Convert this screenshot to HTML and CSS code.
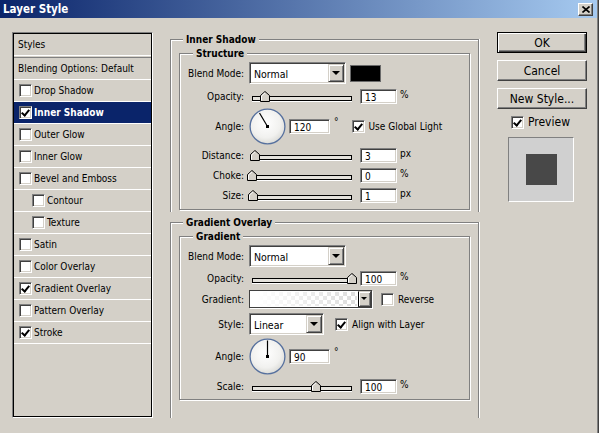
FILE: index.html
```html
<!DOCTYPE html>
<html lang="en">
<head>
    <meta charset="UTF-8">
    <title>Layer Style</title>
    <link rel="stylesheet" href="styles.css">
</head>
<body>
    <div class="window">
        <div class="titlebar">
            <span class="caption">Layer Style</span>
            <span class="close-btn">
                <svg width="8" height="7" viewBox="0 0 8 7"><path d="M0.5 0.5 L7.5 6.5 M7.5 0.5 L0.5 6.5" stroke="#000" stroke-width="1.6" fill="none"/></svg>
            </span>
        </div>

        <div class="dialog">
            <!-- Styles list -->
            <div class="styles-list">
                <div class="styles-inner">
                    <div class="list-row list-head">Styles</div>
                    <div class="list-row blending">Blending Options: Default</div>
                    <div class="list-row"><span class="chk"></span>Drop Shadow</div>
                    <div class="list-row selected"><span class="chk on"></span>Inner Shadow</div>
                    <div class="list-row"><span class="chk"></span>Outer Glow</div>
                    <div class="list-row"><span class="chk"></span>Inner Glow</div>
                    <div class="list-row"><span class="chk"></span>Bevel and Emboss</div>
                    <div class="list-row sub"><span class="chk"></span>Contour</div>
                    <div class="list-row sub"><span class="chk"></span>Texture</div>
                    <div class="list-row"><span class="chk"></span>Satin</div>
                    <div class="list-row"><span class="chk"></span>Color Overlay</div>
                    <div class="list-row"><span class="chk on"></span>Gradient Overlay</div>
                    <div class="list-row"><span class="chk"></span>Pattern Overlay</div>
                    <div class="list-row"><span class="chk on"></span>Stroke</div>
                </div>
            </div>

            <!-- Settings -->
            <div class="settings">
                <div class="section">
                    <div class="section-title">Inner Shadow</div>
                    <div class="group">
                        <div class="group-title">Structure</div>
                        <div class="field field-select">
                            <label>Blend Mode:</label>
                            <div class="select blend"><span class="select-text">Normal</span><span class="drop"></span></div>
                            <span class="swatch"></span>
                        </div>
                        <div class="field">
                            <label>Opacity:</label>
                            <div class="slider"><div class="track"></div><span class="thumb" style="left: 13%"><svg width="10" height="11" viewBox="0 0 10 11"><polygon points="0.5,10.5 0.5,4.5 5,0.5 9.5,4.5 9.5,10.5" fill="#d4d0c8" stroke="#000"/><path d="M1.5 9.5 V5 L5 1.8" stroke="#fff" fill="none"/></svg></span></div>
                            <span class="num">13</span><span class="unit">%</span>
                        </div>
                        <div class="field field-angle">
                            <label>Angle:</label>
                            <svg class="dial" width="37" height="37" viewBox="0 0 37 37">
                                <defs>
                                    <radialGradient id="dialFill1" cx="0.45" cy="0.4" r="0.6">
                                        <stop offset="0" stop-color="#ffffff"/>
                                        <stop offset="0.7" stop-color="#f1f1ef"/>
                                        <stop offset="1" stop-color="#dcdcd8"/>
                                    </radialGradient>
                                </defs>
                                <circle cx="18.5" cy="18.5" r="17.4" fill="url(#dialFill1)" stroke="#56709e" stroke-width="1.3"/>
                                <line x1="18.5" y1="18.5" x2="10.5" y2="5" stroke="#000" stroke-width="1.2"/>
                                <rect x="17" y="17" width="3" height="3" fill="#000"/>
                            </svg>
                            <span class="num num-angle">120</span><span class="deg">°</span>
                            <span class="chk on check-gap"></span><span class="check-label">Use Global Light</span>
                        </div>
                        <div class="field">
                            <label>Distance:</label>
                            <div class="slider"><div class="track"></div><span class="thumb" style="left: 3%"><svg width="10" height="11" viewBox="0 0 10 11"><polygon points="0.5,10.5 0.5,4.5 5,0.5 9.5,4.5 9.5,10.5" fill="#d4d0c8" stroke="#000"/><path d="M1.5 9.5 V5 L5 1.8" stroke="#fff" fill="none"/></svg></span></div>
                            <span class="num">3</span><span class="unit">px</span>
                        </div>
                        <div class="field">
                            <label>Choke:</label>
                            <div class="slider"><div class="track"></div><span class="thumb" style="left: 0%"><svg width="10" height="11" viewBox="0 0 10 11"><polygon points="0.5,10.5 0.5,4.5 5,0.5 9.5,4.5 9.5,10.5" fill="#d4d0c8" stroke="#000"/><path d="M1.5 9.5 V5 L5 1.8" stroke="#fff" fill="none"/></svg></span></div>
                            <span class="num">0</span><span class="unit">%</span>
                        </div>
                        <div class="field">
                            <label>Size:</label>
                            <div class="slider"><div class="track"></div><span class="thumb" style="left: 1%"><svg width="10" height="11" viewBox="0 0 10 11"><polygon points="0.5,10.5 0.5,4.5 5,0.5 9.5,4.5 9.5,10.5" fill="#d4d0c8" stroke="#000"/><path d="M1.5 9.5 V5 L5 1.8" stroke="#fff" fill="none"/></svg></span></div>
                            <span class="num">1</span><span class="unit">px</span>
                        </div>
                    </div>
                </div>

                <div class="section section-gradient">
                    <div class="section-title">Gradient Overlay</div>
                    <div class="group group-gradient">
                        <div class="group-title">Gradient</div>
                        <div class="field field-select">
                            <label>Blend Mode:</label>
                            <div class="select blend"><span class="select-text">Normal</span><span class="drop"></span></div>
                        </div>
                        <div class="field">
                            <label>Opacity:</label>
                            <div class="slider"><div class="track"></div><span class="thumb" style="left: 100%"><svg width="10" height="11" viewBox="0 0 10 11"><polygon points="0.5,10.5 0.5,4.5 5,0.5 9.5,4.5 9.5,10.5" fill="#d4d0c8" stroke="#000"/><path d="M1.5 9.5 V5 L5 1.8" stroke="#fff" fill="none"/></svg></span></div>
                            <span class="num">100</span><span class="unit">%</span>
                        </div>
                        <div class="field field-gradient">
                            <label>Gradient:</label>
                            <div class="gradient-box"><span class="gradient-fill"></span><span class="drop small"></span></div>
                            <span class="chk reverse-gap"></span><span class="check-label">Reverse</span>
                        </div>
                        <div class="field field-select field-style">
                            <label>Style:</label>
                            <div class="select style-select"><span class="select-text">Linear</span><span class="drop"></span></div>
                            <span class="chk on align-gap"></span><span class="check-label">Align with Layer</span>
                        </div>
                        <div class="field field-angle field-angle2">
                            <label>Angle:</label>
                            <svg class="dial" width="37" height="37" viewBox="0 0 37 37">
                                <defs>
                                    <radialGradient id="dialFill2" cx="0.45" cy="0.4" r="0.6">
                                        <stop offset="0" stop-color="#ffffff"/>
                                        <stop offset="0.7" stop-color="#f1f1ef"/>
                                        <stop offset="1" stop-color="#dcdcd8"/>
                                    </radialGradient>
                                </defs>
                                <circle cx="18.5" cy="18.5" r="17.4" fill="url(#dialFill2)" stroke="#56709e" stroke-width="1.3"/>
                                <line x1="18.5" y1="18.5" x2="18.5" y2="2.5" stroke="#000" stroke-width="1.2"/>
                                <rect x="17" y="17" width="3" height="3" fill="#000"/>
                            </svg>
                            <span class="num num-angle">90</span><span class="deg">°</span>
                        </div>
                        <div class="field field-scale">
                            <label>Scale:</label>
                            <div class="slider"><div class="track"></div><span class="thumb" style="left: 64%"><svg width="10" height="11" viewBox="0 0 10 11"><polygon points="0.5,10.5 0.5,4.5 5,0.5 9.5,4.5 9.5,10.5" fill="#d4d0c8" stroke="#000"/><path d="M1.5 9.5 V5 L5 1.8" stroke="#fff" fill="none"/></svg></span></div>
                            <span class="num">100</span><span class="unit">%</span>
                        </div>
                    </div>
                </div>
            </div>

            <!-- Buttons and preview -->
            <div class="actions">
                <div class="btn btn-default">OK</div>
                <div class="btn">Cancel</div>
                <div class="btn">New Style...</div>
                <div class="preview-check"><span class="chk on"></span><span class="check-label">Preview</span></div>
                <div class="preview-box"><span class="preview-swatch"></span></div>
            </div>
        </div>
    </div>
</body>
</html>
```

FILE: styles.css
```css
:root {
    --face: #d4d0c8;
    --shadow: #808080;
    --dark: #404040;
    --hilite: #ffffff;
    --selected: #0a246a;
}

* {
    margin: 0;
    padding: 0;
    box-sizing: border-box;
}

body {
    background: var(--face);
    font-family: Tahoma, "DejaVu Sans Condensed", "Liberation Sans", sans-serif;
    font-size: 10px;
    color: #000;
}

.window {
    width: 599px;
    height: 433px;
    background: var(--face);
    border-right: 1px solid var(--dark);
    box-shadow: inset -1px 0 var(--shadow);
}

/* Title bar */
.titlebar {
    height: 18px;
    margin-right: 1px;
    padding: 0 4px 0 3px;
    display: flex;
    align-items: center;
    justify-content: space-between;
    background: linear-gradient(to right, #0a246a, #a6caf0);
    color: #fff;
}

.caption {
    font-size: 11.5px;
    font-weight: bold;
    line-height: 18px;
}

.close-btn {
    width: 15px;
    height: 13px;
    display: flex;
    align-items: center;
    justify-content: center;
    background: var(--face);
    border: 1px solid;
    border-color: var(--hilite) var(--dark) var(--dark) var(--hilite);
    box-shadow: inset -1px -1px var(--shadow);
}

.dialog {
    display: flex;
    align-items: flex-start;
    padding: 14px 0 0 12px;
}

/* Styles list */
.styles-list {
    width: 141px;
    height: 386px;
    border: 1px solid;
    border-color: var(--shadow) var(--hilite) var(--hilite) var(--shadow);
}

.styles-inner {
    height: 100%;
    border: 1px solid #000;
}

.list-row {
    height: 22px;
    display: flex;
    align-items: center;
    padding-left: 5px;
    border-bottom: 1px solid var(--hilite);
    white-space: nowrap;
}

.list-head,
.blending {
    padding-left: 4px;
}

.list-head {
    box-shadow: 0 1px 0 var(--face), 0 2px 0 var(--shadow);
}

.blending {
    margin-top: 2px;
}

.list-row.sub {
    padding-left: 18px;
}

.list-row.selected {
    background: var(--selected);
    color: #fff;
    font-weight: bold;
}

.list-row .chk {
    margin-right: 2px;
}

/* Checkbox */
.chk {
    position: relative;
    flex: none;
    width: 13px;
    height: 13px;
    background: #fff;
    border: 1px solid;
    border-color: var(--shadow) var(--hilite) var(--hilite) var(--shadow);
    box-shadow: inset 1px 1px var(--dark), inset -1px -1px var(--face);
}

.chk.on::after {
    content: '';
    position: absolute;
    left: 3px;
    top: 1px;
    width: 3px;
    height: 6px;
    border: solid #000;
    border-width: 0 2px 2px 0;
    transform: rotate(40deg);
}

.check-label {
    margin-left: 4px;
    white-space: nowrap;
}

/* Settings column */
.settings {
    width: 309px;
    margin-left: 17px;
    padding-top: 7px;
}

.section {
    position: relative;
    padding: 13px 8px 2px 8px;
    border: 1px solid var(--shadow);
    border-bottom: none;
    box-shadow: inset 1px 1px var(--hilite), 1px 0 var(--hilite);
}

.section-gradient {
    margin-top: 10px;
    padding-bottom: 18px;
}

.section-title,
.group-title {
    position: absolute;
    top: -7px;
    padding: 0 3px;
    line-height: 13px;
    font-weight: bold;
    background: var(--face);
    white-space: nowrap;
}

.section-title {
    left: 12px;
}

.group-title {
    left: 13px;
}

.group {
    position: relative;
    padding: 8px 0 6px 0;
    border: 1px solid var(--shadow);
    box-shadow: inset 1px 1px var(--hilite), 1px 1px var(--hilite);
}

.group-gradient {
    padding-bottom: 5px;
}

.field {
    display: flex;
    align-items: center;
    height: 15px;
    margin-top: 5px;
}

.field label {
    width: 64px;
    flex: none;
    text-align: right;
    white-space: nowrap;
}

.field-select {
    height: 22px;
    margin-top: 0;
}

.group-gradient .field {
    margin-top: 4px;
}

.group-gradient .field-select {
    margin-top: 0;
}

.group-gradient .field-style {
    margin-top: 5px;
}

.field-gradient {
    height: 18px;
}

.field-angle {
    height: 36px;
    margin-top: 4px;
    margin-bottom: -1px;
}

.group-gradient .field-angle2 {
    margin-top: 3px;
}

.group-gradient .field-scale {
    margin-top: 6px;
}

/* Select box */
.select {
    display: flex;
    height: 22px;
    margin-left: 5px;
    background: #fff;
    border: 1px solid;
    border-color: var(--shadow) var(--hilite) var(--hilite) var(--shadow);
    box-shadow: inset 1px 1px var(--dark), inset -1px -1px var(--face);
    padding: 1px;
}

.select.blend {
    width: 97px;
}

.select.style-select {
    width: 75px;
}

.select-text {
    flex: 1;
    padding: 4px 0 0 3px;
    font-size: 10.5px;
}

.drop {
    position: relative;
    width: 16px;
    background: var(--face);
    border: 1px solid;
    border-color: var(--face) var(--dark) var(--dark) var(--face);
    box-shadow: inset 1px 1px var(--hilite), inset -1px -1px var(--shadow);
}

.drop::after {
    content: '';
    position: absolute;
    left: 3px;
    top: 6px;
    border-style: solid;
    border-width: 4px 4px 0 4px;
    border-color: #000 transparent transparent transparent;
}

.drop.small {
    width: 13px;
}

.drop.small::after {
    left: 2px;
    top: 5px;
    border-width: 3px 3px 0 3px;
}

.swatch {
    width: 31px;
    height: 17px;
    margin-left: 4px;
    background: #000;
    border: 1px solid #6a6a6a;
}

/* Slider */
.slider {
    position: relative;
    display: flex;
    align-items: center;
    width: 100px;
    height: 15px;
    margin-left: 8px;
}

.track {
    flex: 1;
    height: 5px;
    margin-top: 3px;
    background: #e4e2dc;
    border: 1px solid #000;
    box-shadow: 0 1px 0 var(--hilite);
}

.thumb {
    position: absolute;
    top: 2px;
    transform: translateX(-50%);
    line-height: 0;
}

.num {
    width: 37px;
    height: 15px;
    margin-left: 8px;
    padding: 2px 0 0 4px;
    line-height: 11px;
    background: #fff;
    border: 1px solid;
    border-color: var(--shadow) var(--hilite) var(--hilite) var(--shadow);
    box-shadow: inset 1px 1px var(--dark), inset -1px -1px var(--face);
}

.num-angle {
    width: 41px;
    margin-left: 3px;
}

.unit {
    margin-left: 3px;
    margin-top: -4px;
}

.deg {
    margin-left: 4px;
    margin-top: -10px;
}

.dial {
    flex: none;
    margin-left: 5px;
}

.check-gap {
    margin-left: 13px;
}

.reverse-gap {
    margin-left: 9px;
}

.align-gap {
    margin-left: 11px;
}

/* Gradient preview */
.gradient-box {
    display: flex;
    width: 123px;
    height: 18px;
    margin-left: 5px;
    border: 1px solid var(--dark);
    box-shadow: 1px 1px 0 var(--hilite);
}

.gradient-fill {
    flex: 1;
    border: 1px solid #fff;
    background:
        linear-gradient(to right, #fff 5%, rgba(255, 255, 255, 0.2) 95%),
        repeating-conic-gradient(#d6d6d6 0 25%, #fff 0 50%) 0 0 / 8px 8px;
}

.gradient-box .drop {
    border-left: 1px solid #000;
}

/* Right column */
.actions {
    width: 90px;
    margin-left: 18px;
}

.btn {
    height: 21px;
    margin-bottom: 7px;
    display: flex;
    align-items: center;
    justify-content: center;
    background: var(--face);
    border: 1px solid;
    border-color: var(--hilite) var(--dark) var(--dark) var(--hilite);
    box-shadow: inset -1px -1px var(--shadow);
    font-size: 12px;
}

.btn-default {
    border: 1px solid #000;
    box-shadow: inset 1px 1px var(--hilite), inset -1px -1px var(--dark), inset -2px -2px var(--shadow);
}

.preview-check {
    display: flex;
    align-items: center;
    margin-top: -1px;
    padding-left: 14px;
    font-size: 12px;
}

.preview-box {
    width: 66px;
    height: 65px;
    margin: 8px 0 0 11px;
    display: flex;
    align-items: center;
    justify-content: center;
    background: #d0d0d0;
    border: 1px solid;
    border-color: var(--shadow) var(--hilite) var(--hilite) var(--shadow);
}

.preview-swatch {
    width: 31px;
    height: 31px;
    background: #484848;
}
```
